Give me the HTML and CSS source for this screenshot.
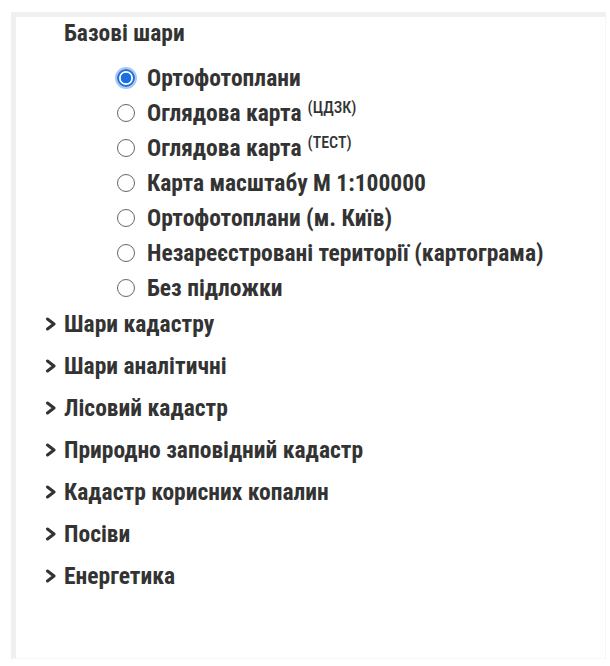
FILE: index.html
```html
<!DOCTYPE html>
<html lang="uk">
<head>
<meta charset="utf-8">
<title>Шари</title>
<link rel="stylesheet" href="styles.css">
</head>
<body>
<div class="panel">
  <section class="base">
    <div class="base-title">Базові шари</div>
    <ul class="radios">
      <li><span class="radio checked"></span>Ортофотоплани</li>
      <li><span class="radio"></span>Оглядова карта <sup>(ЦДЗК)</sup></li>
      <li><span class="radio"></span>Оглядова карта <sup>(ТЕСТ)</sup></li>
      <li><span class="radio"></span>Карта масштабу М 1:100000</li>
      <li><span class="radio"></span>Ортофотоплани (м. Київ)</li>
      <li><span class="radio"></span>Незареєстровані території (картограма)</li>
      <li><span class="radio"></span>Без підложки</li>
    </ul>
  </section>
  <ul class="groups">
    <li><svg class="chev" viewBox="0 0 12 14"><polyline points="2.5,2 9,7 2.5,12"/></svg>Шари кадастру</li>
    <li><svg class="chev" viewBox="0 0 12 14"><polyline points="2.5,2 9,7 2.5,12"/></svg>Шари аналітичні</li>
    <li><svg class="chev" viewBox="0 0 12 14"><polyline points="2.5,2 9,7 2.5,12"/></svg>Лісовий кадастр</li>
    <li><svg class="chev" viewBox="0 0 12 14"><polyline points="2.5,2 9,7 2.5,12"/></svg>Природно заповідний кадастр</li>
    <li><svg class="chev" viewBox="0 0 12 14"><polyline points="2.5,2 9,7 2.5,12"/></svg>Кадастр корисних копалин</li>
    <li><svg class="chev" viewBox="0 0 12 14"><polyline points="2.5,2 9,7 2.5,12"/></svg>Посіви</li>
    <li><svg class="chev" viewBox="0 0 12 14"><polyline points="2.5,2 9,7 2.5,12"/></svg>Енергетика</li>
  </ul>
</div>
</body>
</html>
```

FILE: styles.css
```css
html, body {
  margin: 0;
  background: #ffffff;
}

body {
  font-family: Roboto, "Noto Sans", sans-serif;
  font-weight: 700;
  font-stretch: condensed;
  font-size: 23.5px;
  color: #333333;
}

.panel {
  margin: 12px 4px 0 11px;
  height: 647px;
  box-sizing: border-box;
  border-top: 5px solid #f0f0f0;
  border-left: 5px solid #f0f0f0;
  border-right: 1px solid #f6f6f6;
  border-bottom: 1px solid #f8f8f8;
}

.base-title {
  padding: 4px 0 0 48px;
  line-height: 24px;
}

.radios {
  list-style: none;
  margin: 15px 0 0;
  padding: 0 0 0 101px;
}

.radios li {
  display: flex;
  align-items: center;
  height: 35px;
  white-space: nowrap;
}

.radios sup {
  font-size: 16px;
  font-weight: 500;
  line-height: 0;
  margin-left: 6px;
  position: relative;
  top: -5px;
}

.radio {
  flex: none;
  width: 18px;
  height: 18px;
  box-sizing: border-box;
  border: 1.5px solid #666666;
  border-radius: 50%;
  margin-right: 12px;
  background: #fff;
}

.radio.checked {
  border: 2px solid #1b6fe0;
  background: radial-gradient(circle, #1b6fe0 0 5px, #ffffff 5.6px);
  box-shadow: 0 0 0 2px #a9c8f2;
}

.groups {
  list-style: none;
  margin: -2px 0 0;
  padding: 0 0 0 29px;
}

.groups li {
  display: flex;
  align-items: center;
  height: 42px;
  white-space: nowrap;
}

.chev {
  width: 12px;
  height: 14px;
  margin-right: 7px;
  fill: none;
  stroke: #333333;
  stroke-width: 3;
  stroke-linecap: round;
  stroke-linejoin: round;
}
```
